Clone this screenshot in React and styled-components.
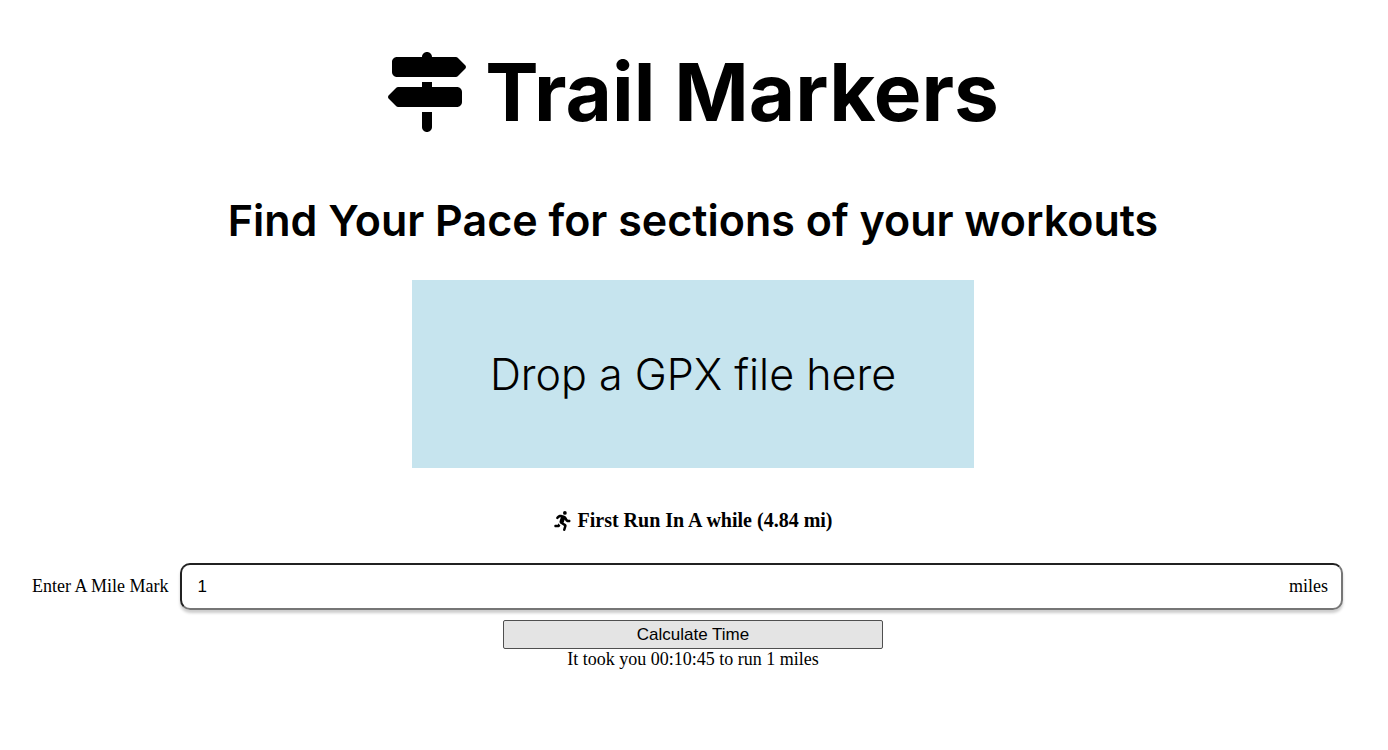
import React, { useState } from "react";
import styled, { createGlobalStyle } from "styled-components";
import { FaSignsPost, FaPersonRunning } from "react-icons/fa6";

const GlobalStyle = createGlobalStyle`
  * { box-sizing: border-box; }
  body { margin: 0; background: #fff; color: #000; font-family: "Liberation Serif", serif; font-size: 18px; }
`;
const Page = styled.main`
  display: flex;
  flex-direction: column;
  align-items: center;
  padding: 44px 26px 24px 24px;
`;
const Title = styled.h1`
  display: flex;
  align-items: center;
  gap: 18px;
  margin: 0;
  font: 700 80px/96px Inter, sans-serif;
`;
const Tagline = styled.h2`
  margin: 52px 0 32px;
  font: 600 43px/56px Inter, sans-serif;
  text-align: center;
`;
const DropZone = styled.button`
  padding: 64px 78px;
  border: 0;
  background: #c6e4ee;
  color: #000;
  font: 300 43px/60px Inter, sans-serif;
`;
const RunName = styled.h3`
  display: flex;
  align-items: center;
  gap: 4px;
  margin: 40px 0 30px;
  font-size: 20px;
  line-height: 25px;
`;
const Form = styled.form`
  display: flex;
  flex-direction: column;
  align-items: center;
  width: 100%;
`;
const Field = styled.div`
  display: flex;
  align-items: center;
  gap: 12px;
  width: 100%;
  padding: 0 19px 0 8px;
`;
const InputFrame = styled.div`
  display: flex;
  flex: 1;
  align-items: center;
  height: 47px;
  padding: 0 13px 0 15px;
  border: 2px inset #767676;
  border-radius: 10px;
  box-shadow: 0 3px 3px rgba(0, 0, 0, 0.2);
`;
const MileInput = styled.input`
  flex: 1;
  min-width: 0;
  padding: 0;
  border: 0;
  outline: 0;
  background: transparent;
  font: 17px "Liberation Sans", sans-serif;
`;
const Submit = styled.button`
  width: 380px;
  max-width: 100%;
  height: 29px;
  margin-top: 10px;
  border: 1px solid #4f4f4f;
  border-radius: 2px;
  background: #e4e4e4;
  color: #000;
  font: 17px "Liberation Sans", sans-serif;
`;
const Result = styled.output`
  line-height: 20px;
`;

export default function App() {
  const [mile, setMile] = useState("1");
  return (
    <>
      <GlobalStyle />
      <Page>
        <Title><FaSignsPost aria-hidden="true" />Trail Markers</Title>
        <Tagline>Find Your Pace for sections of your workouts</Tagline>
        <DropZone type="button">Drop a GPX file here</DropZone>
        <RunName><FaPersonRunning aria-hidden="true" />First Run In A while (4.84 mi)</RunName>
        <Form onSubmit={(e) => e.preventDefault()}>
          <Field>
            <label htmlFor="mile">Enter A Mile Mark</label>
            <InputFrame>
              <MileInput id="mile" value={mile} onChange={(e) => setMile(e.target.value)} />
              <span>miles</span>
            </InputFrame>
          </Field>
          <Submit type="submit">Calculate Time</Submit>
          <Result htmlFor="mile">It took you 00:10:45 to run 1 miles</Result>
        </Form>
      </Page>
    </>
  );
}
